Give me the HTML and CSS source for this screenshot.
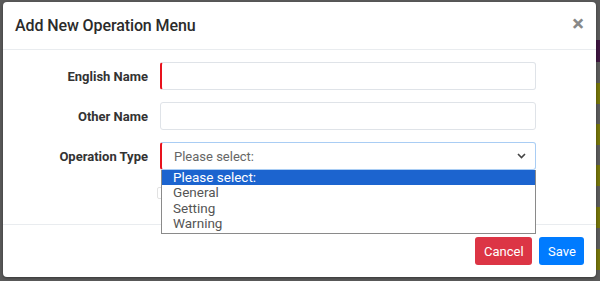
FILE: index.html
```html
<!DOCTYPE html>
<html lang="en">
<head>
    <meta charset="UTF-8">
    <meta name="viewport" content="width=device-width, initial-scale=1.0">
    <title>Add New Operation Menu</title>
    <link rel="stylesheet" href="styles.css">
</head>
<body>

    <div class="modal">
        <div class="modal-header">
            <h5 class="modal-title">Add New Operation Menu</h5>
            <span class="close">&times;</span>
        </div>

        <div class="modal-body">
            <div class="form-row">
                <label>English Name</label>
                <div class="form-control required"></div>
            </div>
            <div class="form-row">
                <label>Other Name</label>
                <div class="form-control"></div>
            </div>
            <div class="form-row">
                <label>Operation Type</label>
                <div class="select-wrap">
                    <div class="form-control required focused">
                        <span class="placeholder">Please select:</span>
                        <svg class="chevron" width="9" height="6" viewBox="0 0 9 6">
                            <path d="M1 1 L4.5 4.5 L8 1" fill="none" stroke="#444" stroke-width="1.6"/>
                        </svg>
                    </div>
                    <span class="ghost-box"></span>
                    <!-- open select popup -->
                    <ul class="dropdown">
                        <li class="active">Please select:</li>
                        <li>General</li>
                        <li>Setting</li>
                        <li>Warning</li>
                    </ul>
                </div>
            </div>
        </div>

        <div class="modal-footer">
            <button class="btn btn-danger">Cancel</button>
            <button class="btn btn-primary">Save</button>
        </div>
    </div>

</body>
</html>
```

FILE: styles.css
```css
body {
    margin: 0;
    height: 281px;
    overflow: hidden;
    font-family: Roboto, "Liberation Sans", sans-serif;
    background-color: #5a5a5a;
    background-image: linear-gradient(to bottom,
        #5a5a5a 0, #5a5a5a 40px, #3e1740 40px, #3e1740 62px,
        #5a5a5a 62px, #5a5a5a 83px, #74740a 83px, #74740a 104px,
        #5a5a5a 104px, #5a5a5a 124px, #74740a 124px, #74740a 145px,
        #5a5a5a 145px, #5a5a5a 165px, #74740a 165px, #74740a 186px,
        #5a5a5a 186px, #5a5a5a 207px, #74740a 207px, #74740a 228px,
        #5a5a5a 228px, #5a5a5a 249px, #74740a 249px, #74740a 270px,
        #5a5a5a 270px);
    background-size: 4px 281px;
    background-position: right top;
    background-repeat: no-repeat;
}
.modal {
    margin: 2px 0 0 3px;
    width: 593px;
    height: 275px;
    background: white;
    border-radius: 4px;
    box-shadow: 0 1px 3px rgba(0, 0, 0, 0.4);
    display: flex;
    flex-direction: column;
    color: #212529;
}
.modal-header {
    height: 47px;
    border-bottom: 1px solid #e9ecef;
    display: flex;
    align-items: center;
    justify-content: space-between;
    padding: 0 12px 0 12px;
}
.modal-title {
    margin: 0;
    font-size: 16px;
    font-weight: 500;
    letter-spacing: -0.1px;
    color: #2b2b2b;
}
.close {
    font-size: 22px;
    font-weight: 700;
    color: #888;
    line-height: 1;
    margin-top: -3px;
}
.modal-body {
    flex: 1;
    padding-top: 12px;
    display: flex;
    flex-direction: column;
    gap: 12px;
}
.form-row {
    display: grid;
    grid-template-columns: 145px 376px;
    column-gap: 12px;
    align-items: center;
}
.form-row label {
    text-align: right;
    font-size: 13px;
    font-weight: 700;
    color: #333;
}
.form-control {
    box-sizing: border-box;
    height: 28px;
    border: 1px solid #dfe3e8;
    border-radius: 3px;
    background: white;
    display: flex;
    align-items: center;
    padding: 0 8px 0 12px;
}
.form-control.required {
    border-left: 2px solid #e8121d;
}
.form-control.focused {
    border-color: #a9cdf4;
    border-left-color: #e8121d;
}
.placeholder {
    flex: 1;
    font-size: 13px;
    color: #666;
}
.chevron {
    margin-right: 1px;
}
.select-wrap {
    position: relative;
}
.ghost-box {
    position: absolute;
    left: -3px;
    top: 45px;
    width: 10px;
    height: 10px;
    border: 1px solid #e2e2e2;
    border-radius: 2px;
}
.dropdown {
    position: absolute;
    left: 1px;
    right: 0;
    top: 28px;
    margin: 0;
    padding: 0 0 1px 0;
    list-style: none;
    background: white;
    border: 1px solid #8a8a8a;
    border-top: none;
    font-size: 13.5px;
    color: #555;
}
.dropdown li {
    height: 15.4px;
    line-height: 15.4px;
    padding-left: 11px;
}
.dropdown li.active {
    background: #1c64cf;
    color: white;
}
.modal-footer {
    border-top: 1px solid #e9ecef;
    height: 53px;
    display: flex;
    justify-content: flex-end;
    align-items: center;
    gap: 7px;
    padding: 0 12px;
    box-sizing: border-box;
}
.btn {
    height: 28px;
    border: none;
    border-radius: 3px;
    font-family: Roboto, "Liberation Sans", sans-serif;
    font-size: 13px;
    color: white;
    padding: 0 9px;
}
.btn-danger {
    background: #dc3545;
    width: 57px;
}
.btn-primary {
    background: #007bff;
    width: 45px;
}
```
